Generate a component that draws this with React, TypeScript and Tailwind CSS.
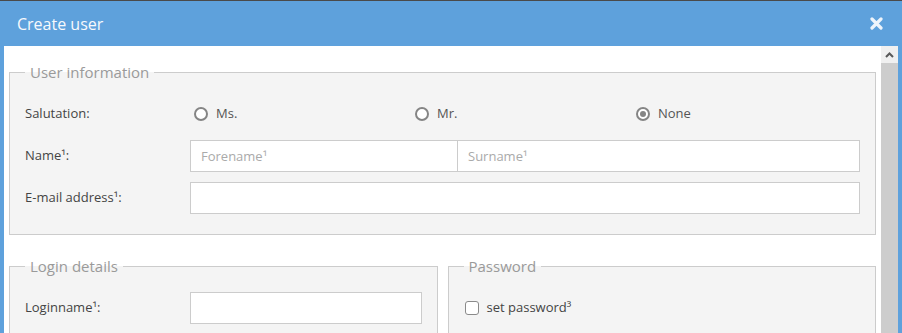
import type { ReactNode } from "react";

const font = { fontFamily: '"Open Sans", "Noto Sans", sans-serif' };

function Radio({ label, checked }: { label: string; checked?: boolean }) {
  return (
    <label className="flex items-center gap-[8px] pl-[4px] text-[13px] text-[#555]">
      <span className="flex h-[14px] w-[14px] items-center justify-center rounded-full border-2 border-[#858585] bg-white">
        {checked ? <span className="h-[6px] w-[6px] rounded-full bg-[#858585]" /> : null}
      </span>
      {label}
    </label>
  );
}

function Group({ title, children, className = "" }: { title: string; children: ReactNode; className?: string }) {
  return (
    <fieldset className={`border border-[#cccccc] bg-[#f4f4f4] ${className}`}>
      <legend className="px-[5px] text-[15px] leading-[20px] text-[#9a9a9a]">{title}</legend>
      {children}
    </fieldset>
  );
}

function Field({ label, children }: { label: string; children: ReactNode }) {
  return (
    <div className="flex h-[32px] items-center">
      <div className="w-[165px] shrink-0 text-[13px] text-[#444]">{label}</div>
      <div className="flex h-full flex-1">{children}</div>
    </div>
  );
}

const inputCls =
  "h-[32px] border border-[#cccccc] bg-white px-[10px] text-[13px] text-[#444] placeholder:text-[#aaaaaa] outline-none";

export default function App() {
  return (
    <div style={font} className="flex h-[333px] w-[902px] flex-col overflow-hidden bg-[#5ea1dc]">
      <header className="flex h-[46px] shrink-0 items-center justify-between border-t border-[#4a4a4a] pl-[17px] pr-[19px]">
        <h1 className="text-[16px] text-[#f7f9fc]">Create user</h1>
        <svg width="13" height="13" viewBox="0 0 13 13" aria-label="close">
          <path d="M2 2 L11 11 M11 2 L2 11" stroke="#eef4fb" strokeWidth="3.2" strokeLinecap="round" />
        </svg>
      </header>

      <div className="flex min-h-0 flex-1 pl-[4px] pr-[4px]">
        <main className="flex-1 bg-white px-[5px] pt-[16px]">
          <Group title="User information" className="px-[15px] pb-[20px] pt-[16px]">
            <div className="flex flex-col gap-[10px]">
              <Field label="Salutation:">
                <div className="grid flex-1 grid-cols-[221px_221px_1fr] items-center">
                  <Radio label="Ms." />
                  <Radio label="Mr." />
                  <Radio label="None" checked />
                </div>
              </Field>
              <Field label="Name¹:">
                <input className={`${inputCls} w-[40%]`} placeholder="Forename¹" />
                <input className={`${inputCls} -ml-px flex-1`} placeholder="Surname¹" />
              </Field>
              <Field label="E-mail address¹:">
                <input className={`${inputCls} flex-1`} />
              </Field>
            </div>
          </Group>

          <div className="mt-[21px] grid grid-cols-2 gap-[10px]">
            <Group title="Login details" className="px-[15px] pb-[20px] pt-[16px]">
              <Field label="Loginname¹:">
                <input className={`${inputCls} flex-1`} />
              </Field>
            </Group>
            <Group title="Password" className="px-[15px] pb-[20px] pt-[16px]">
              <label className="flex h-[32px] items-center gap-[8px] pl-px text-[13px] text-[#444]">
                <span className="h-[14px] w-[14px] rounded-[3px] border border-[#8a8a8a] bg-white" />
                set password³
              </label>
            </Group>
          </div>
        </main>

        <aside className="flex w-[17px] flex-col bg-[#cdcdcd]">
          <div className="flex h-[17px] items-center justify-center bg-[#f0f0f0]">
            <svg width="9" height="6" viewBox="0 0 9 6">
              <path d="M1 5 L4.5 1.5 L8 5" fill="none" stroke="#5a5a5a" strokeWidth="2" />
            </svg>
          </div>
        </aside>
      </div>
    </div>
  );
}
